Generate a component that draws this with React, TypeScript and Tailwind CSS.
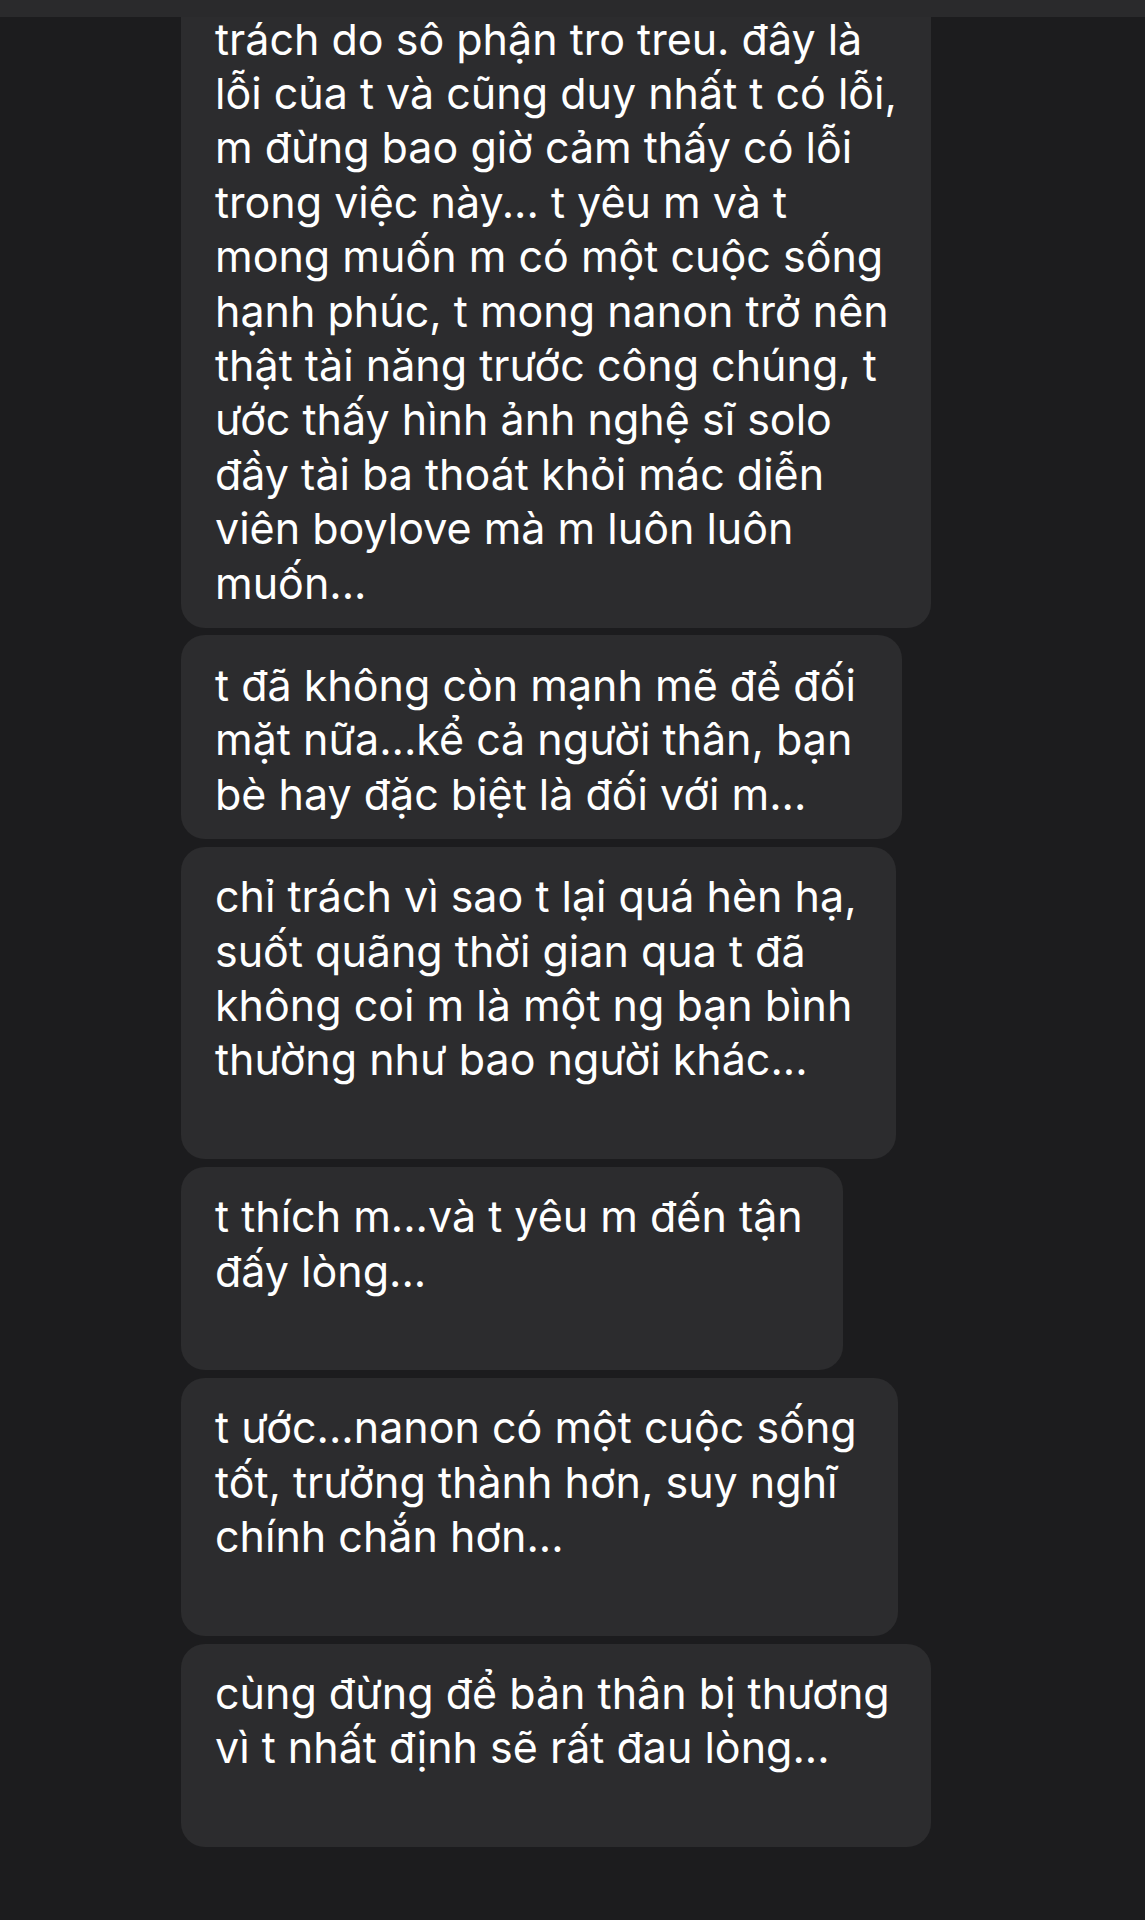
const messages: { lines: string[]; width: string; trailing?: boolean; first?: boolean }[] = [
  {
    first: true,
    width: 'w-[750px]',
    lines: [
      'trách do sô phận tro treu. đây là',
      'lỗi của t và cũng duy nhất t có lỗi,',
      'm đừng bao giờ cảm thấy có lỗi',
      'trong việc này... t yêu m và t',
      'mong muốn m có một cuộc sống',
      'hạnh phúc, t mong nanon trở nên',
      'thật tài năng trước công chúng, t',
      'ước thấy hình ảnh nghệ sĩ solo',
      'đầy tài ba thoát khỏi mác diễn',
      'viên boylove mà m luôn luôn',
      'muốn...',
    ],
  },
  {
    width: 'w-[721px]',
    lines: ['t đã không còn mạnh mẽ để đối', 'mặt nữa...kể cả người thân, bạn', 'bè hay đặc biệt là đối với m...'],
  },
  {
    width: 'w-[715px]',
    trailing: true,
    lines: [
      'chỉ trách vì sao t lại quá hèn hạ,',
      'suốt quãng thời gian qua t đã',
      'không coi m là một ng bạn bình',
      'thường như bao người khác...',
    ],
  },
  {
    width: 'w-[662px]',
    trailing: true,
    lines: ['t thích m...và t yêu m đến tận', 'đấy lòng...'],
  },
  {
    width: 'w-[717px]',
    trailing: true,
    lines: ['t ước...nanon có một cuộc sống', 'tốt, trưởng thành hơn, suy nghĩ', 'chính chắn hơn...'],
  },
  {
    width: 'w-[750px]',
    trailing: true,
    lines: ['cùng đừng để bản thân bị thương', 'vì t nhất định sẽ rất đau lòng...'],
  },
]

export default function App() {
  return (
    <div className="relative h-[1920px] w-[1145px] overflow-hidden bg-[#1c1c1e] font-['Inter',sans-serif] text-white">
      {/* thanh trên cùng */}
      <div className="absolute inset-x-0 top-0 z-10 h-[17px] bg-[#2a2a2c]" />

      <div className="flex flex-col items-start gap-[7.5px] pl-[181px]">
        {messages.map((m, i) => (
          <div
            key={i}
            className={`${m.width} rounded-[24px] bg-[#2c2c2e] px-[34px] pb-[18px] ${m.first ? 'rounded-t-none pt-[11.5px]' : 'pt-[22.5px]'}`}
          >
            <p className="whitespace-nowrap text-[43px] leading-[54.4px]">
              {m.lines.map((l, j) => (
                <span key={j} className="block">
                  {l}
                </span>
              ))}
              {m.trailing && <span className="block">&nbsp;</span>}
            </p>
          </div>
        ))}
      </div>
    </div>
  )
}
